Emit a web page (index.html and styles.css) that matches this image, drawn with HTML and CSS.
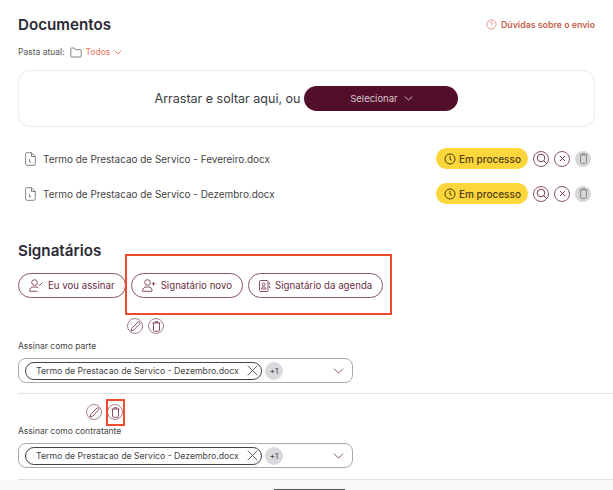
FILE: index.html
```html
<!DOCTYPE html>
<html lang="pt-BR">
<head>
  <meta charset="UTF-8" />
  <meta name="viewport" content="width=device-width, initial-scale=1.0"/>
  <title>Documentos</title>
  <link rel="stylesheet" href="styles.css">
</head>
<body>
  <div class="page">
    <div class="head-row">
      <h2>Documentos</h2>
      <a class="help-link">
        <svg width="11" height="11" viewBox="0 0 12 12" fill="none" stroke="#d9826f" stroke-width="0.9"><circle cx="6" cy="6" r="5"/><path d="M4.600 4.700a1.400 1.400 0 1 1 2.100 1.200c-.5.3-.7.6-.7 1.100M6 8.500v.4"/></svg>
        Dúvidas sobre o envio
      </a>
    </div>

    <div class="folder-row">
      <span>Pasta atual:</span>
      <svg class="folder-icon" width="12" height="11" viewBox="0 0 12 11" fill="none" stroke="#666" stroke-width="0.8"><path d="M.8 2v7.200c0 .5.3.8.8.8h8.800c.5 0 .8-.3.8-.8V3.400c0-.5-.3-.8-.8-.8H5.400L4.200 1H1.600C1.100 1 .8 1.400 .8 2z"/></svg>
      <span class="folder-name">Todos</span>
      <svg width="8" height="5" viewBox="0 0 8 5" fill="none" stroke="#f0735a" stroke-width="0.9"><path d="M.7.7 4 4 7.300.7"/></svg>
    </div>

    <div class="dropzone">
      <span>Arrastar e soltar aqui, ou</span>
      <button class="select-button">
        Selecionar
        <svg width="9" height="5" viewBox="0 0 9 5" fill="none" stroke="#d9c6ce" stroke-width="0.9"><path d="M.7.7 4.500 4 8.300.7"/></svg>
      </button>
    </div>

    <div class="file-list">
      <div class="file-row">
        <svg class="file-icon" width="11" height="14" viewBox="0 0 11 14" fill="none" stroke="#666" stroke-width="0.8"><path d="M1.800.7h4.700l3.800 3.800v7.300c0 .9-.6 1.500-1.400 1.500H1.800c-.7 0-1.200-.6-1.200-1.500V2.200C.6 1.300 1.100.7 1.800.7zM6.500.7v3.800h3.800M4.500 7v3h1.500"/></svg>
        <span class="file-name">Termo de Prestacao de Servico - Fevereiro.docx</span>
        <span class="status">
          <svg width="12" height="12" viewBox="0 0 12 12" fill="none" stroke="#4a3d12" stroke-width="1"><circle cx="6" cy="6" r="5"/><path d="M6 3v3.200l2 1.200"/></svg>
          Em processo
        </span>
        <span class="round-icon">
          <svg width="11" height="11" viewBox="0 0 11 11" fill="none" stroke="#7a3a50" stroke-width="1"><circle cx="5" cy="5" r="3.800"/><path d="m7.800 7.800 2.700 2.700"/></svg>
        </span>
        <span class="round-icon">
          <svg width="7" height="7" viewBox="0 0 7 7" fill="none" stroke="#7a3a50" stroke-width="1"><path d="m1 1 5 5M6 1 1 6"/></svg>
        </span>
        <span class="round-icon disabled">
          <svg width="9" height="11" viewBox="0 0 9 11" fill="none" stroke="#8a8a8a" stroke-width="1"><path d="M.5 2h8M3 2V.7h3V2M1.500 2v7.300c0 .6.4 1 1 1h4c.6 0 1-.4 1-1V2"/></svg>
        </span>
      </div>
      <div class="file-row">
        <svg class="file-icon" width="11" height="14" viewBox="0 0 11 14" fill="none" stroke="#666" stroke-width="0.8"><path d="M1.800.7h4.700l3.800 3.800v7.300c0 .9-.6 1.500-1.400 1.500H1.800c-.7 0-1.200-.6-1.200-1.500V2.200C.6 1.300 1.100.7 1.800.7zM6.500.7v3.800h3.800M4.500 7v3h1.500"/></svg>
        <span class="file-name">Termo de Prestacao de Servico - Dezembro.docx</span>
        <span class="status">
          <svg width="12" height="12" viewBox="0 0 12 12" fill="none" stroke="#4a3d12" stroke-width="1"><circle cx="6" cy="6" r="5"/><path d="M6 3v3.200l2 1.200"/></svg>
          Em processo
        </span>
        <span class="round-icon">
          <svg width="11" height="11" viewBox="0 0 11 11" fill="none" stroke="#7a3a50" stroke-width="1"><circle cx="5" cy="5" r="3.800"/><path d="m7.800 7.800 2.700 2.700"/></svg>
        </span>
        <span class="round-icon">
          <svg width="7" height="7" viewBox="0 0 7 7" fill="none" stroke="#7a3a50" stroke-width="1"><path d="m1 1 5 5M6 1 1 6"/></svg>
        </span>
        <span class="round-icon disabled">
          <svg width="9" height="11" viewBox="0 0 9 11" fill="none" stroke="#8a8a8a" stroke-width="1"><path d="M.5 2h8M3 2V.7h3V2M1.500 2v7.300c0 .6.4 1 1 1h4c.6 0 1-.4 1-1V2"/></svg>
        </span>
      </div>
    </div>

    <h2 class="signers-title">Signatários</h2>

    <div class="signer-buttons">
      <button class="pill-button">
        <svg width="14" height="13" viewBox="0 0 14 13" fill="none" stroke="#7a3a50" stroke-width="0.9"><circle cx="5.500" cy="3.500" r="2.800"/><path d="M.7 12.300v-1c0-2 1.600-3.300 3.500-3.300h2.500c1.200 0 2 .4 2.700 1M.7 12.300h7.800M9.500 5.500l1 1 3-3"/></svg>
        Eu vou assinar
      </button>
      <button class="pill-button">
        <svg width="14" height="13" viewBox="0 0 14 13" fill="none" stroke="#7a3a50" stroke-width="0.9"><circle cx="5.500" cy="3.500" r="2.800"/><path d="M.7 12.300v-1c0-2 1.600-3.300 3.500-3.300h2.500c1.900 0 3.300 1.300 3.300 3.300v1zM11.500 3v3.600M9.700 4.800h3.600"/></svg>
        Signatário novo
      </button>
      <button class="pill-button">
        <svg width="11" height="12" viewBox="0 0 11 12" fill="none" stroke="#7a3a50" stroke-width="0.9"><rect x=".5" y=".5" width="8.500" height="11" rx="1"/><circle cx="4.700" cy="4.500" r="1.400"/><path d="M2.400 9c0-1.300 1-2 2.300-2s2.300.7 2.300 2zM10.500 2.500v2M10.500 6v2"/></svg>
        Signatário da agenda
      </button>
    </div>

    <div class="edit-icons first">
      <span class="round-icon soft">
        <svg width="11" height="11" viewBox="0 0 11 11" fill="none" stroke="#7a3a50" stroke-width="0.9"><path d="M1 10l.7-2.700L8 1c.5-.4 1-.4 1.400 0l.4.4c.4.500.4 1 0 1.400L3.500 9.200z"/></svg>
      </span>
      <span class="round-icon soft">
        <svg width="9" height="11" viewBox="0 0 9 11" fill="none" stroke="#7a3a50" stroke-width="0.9"><path d="M.5 2h8M3 2V.7h3V2M1.500 2v7.300c0 .6.4 1 1 1h4c.6 0 1-.4 1-1V2"/></svg>
      </span>
    </div>

    <label class="field-label">Assinar como parte</label>
    <div class="select-box">
      <span class="chip">
        Termo de Prestacao de Servico - Dezembro.docx
        <svg width="11" height="11" viewBox="0 0 11 11" fill="none" stroke="#555" stroke-width="0.9"><path d="m.7.7 9.600 9.600M10.300.7.7 10.300"/></svg>
      </span>
      <span class="more-count">+1</span>
      <svg class="select-arrow" width="11" height="6" viewBox="0 0 12 7" fill="none" stroke="#7a3a50" stroke-width="1"><path d="M.7.7 6 6l5.300-5.300"/></svg>
    </div>

    <hr class="divider">

    <div class="edit-icons second">
      <span class="round-icon soft">
        <svg width="11" height="11" viewBox="0 0 11 11" fill="none" stroke="#7a3a50" stroke-width="0.9"><path d="M1 10l.7-2.700L8 1c.5-.4 1-.4 1.400 0l.4.4c.4.500.4 1 0 1.400L3.500 9.200z"/></svg>
      </span>
      <span class="round-icon soft">
        <svg width="9" height="11" viewBox="0 0 9 11" fill="none" stroke="#7a3a50" stroke-width="0.9"><path d="M.5 2h8M3 2V.7h3V2M1.500 2v7.300c0 .6.4 1 1 1h4c.6 0 1-.4 1-1V2"/></svg>
      </span>
    </div>

    <label class="field-label tight">Assinar como contratante</label>
    <div class="select-box">
      <span class="chip">
        Termo de Prestacao de Servico - Dezembro.docx
        <svg width="11" height="11" viewBox="0 0 11 11" fill="none" stroke="#555" stroke-width="0.9"><path d="m.7.7 9.600 9.600M10.300.7.7 10.300"/></svg>
      </span>
      <span class="more-count">+1</span>
      <svg class="select-arrow" width="11" height="6" viewBox="0 0 12 7" fill="none" stroke="#7a3a50" stroke-width="1"><path d="M.7.7 6 6l5.300-5.300"/></svg>
    </div>

    <hr class="divider last">
  </div>

  <div class="footer"><span class="footer-bar"></span></div>

  <!-- marcas vermelhas da captura -->
  <div class="mark mark-buttons"></div>
  <div class="mark mark-trash"></div>
</body>
</html>
```

FILE: styles.css
```css
body {
  margin: 0;
  position: relative;
  width: 613px;
  height: 490px;
  overflow: hidden;
  background-color: #fff;
  color: #2b2b33;
  font-family: Inter, 'Noto Sans', sans-serif;
}

.page {
  box-sizing: border-box;
  padding: 16px 18px 0;
  height: 480px;
}

h2 {
  margin: 0;
  font-size: 15.2px;
  line-height: 18px;
  font-weight: 600;
  color: #2a2a35;
}

.head-row {
  display: flex;
  justify-content: space-between;
  align-items: center;
}

.help-link {
  display: flex;
  align-items: center;
  gap: 4px;
  margin-bottom: 2px;
  font-size: 8.800px;
  font-weight: 600;
  color: #c4614e;
}

.folder-row {
  display: flex;
  align-items: center;
  gap: 4px;
  margin-top: 11px;
  height: 14px;
  font-size: 8.500px;
  color: #555;
}

.folder-icon {
  margin-left: 1px;
}

.folder-name {
  color: #f0735a;
}

.dropzone {
  display: flex;
  justify-content: center;
  align-items: center;
  gap: 4px;
  margin-top: 11px;
  width: 577px;
  height: 57px;
  box-sizing: border-box;
  border: 1px solid #eaeaf0;
  border-radius: 12px;
  font-size: 12.500px;
  color: #3a3a40;
}

.select-button {
  display: flex;
  justify-content: center;
  align-items: center;
  gap: 6px;
  width: 154px;
  height: 25px;
  padding: 0;
  border: none;
  border-radius: 13px;
  background-color: #520f29;
  color: #d9c6ce;
  font-family: inherit;
  font-size: 9.500px;
}

.file-list {
  margin-top: 14px;
}

.file-row {
  display: flex;
  align-items: center;
  gap: 5px;
  height: 35px;
  padding-left: 7px;
  padding-right: 4px;
  font-size: 9.930px;
  color: #444;
}

.file-icon {
  margin-right: 2px;
}

.file-name {
  flex: 1;
}

.status {
  display: flex;
  align-items: center;
  gap: 3px;
  width: 92px;
  height: 21px;
  box-sizing: border-box;
  padding-left: 8px;
  border-radius: 11px;
  background-color: #fdd63c;
  color: #4a3d12;
  font-size: 10px;
  font-weight: 500;
}

.round-icon {
  display: flex;
  justify-content: center;
  align-items: center;
  width: 16px;
  height: 16px;
  box-sizing: border-box;
  border: 1px solid #8a5468;
  border-radius: 50%;
}

.round-icon.disabled {
  border: none;
  background-color: #d6d6d6;
}

.round-icon.soft {
  border-color: #a8808e;
}

.signers-title {
  margin-top: 31px;
}

.signer-buttons {
  display: flex;
  gap: 5px;
  margin-top: 13px;
}

.pill-button {
  display: flex;
  align-items: center;
  gap: 5px;
  height: 25px;
  padding: 0 10px;
  border: 1px solid #8a5468;
  border-radius: 13px;
  background-color: #fff;
  color: #6b2d43;
  font-family: inherit;
  font-size: 9.700px;
}

.edit-icons {
  display: flex;
  gap: 5px;
}

.edit-icons.first {
  margin: 20px 0 0 109px;
}

.edit-icons.second {
  margin: 10px 0 0 68px;
}

.field-label {
  display: block;
  margin-top: 6px;
  font-size: 8.500px;
  line-height: 12px;
  color: #444;
}

.field-label.tight {
  margin-top: 5px;
}

.select-box {
  display: flex;
  align-items: center;
  gap: 3px;
  margin-top: 6px;
  width: 335px;
  height: 25px;
  box-sizing: border-box;
  padding: 0 8px 0 6px;
  border: 1px solid #aaa;
  border-radius: 8px;
}

.chip {
  display: flex;
  align-items: center;
  justify-content: space-between;
  width: 237px;
  height: 18px;
  box-sizing: border-box;
  padding: 0 3px 0 10px;
  border: 1px solid #444;
  border-radius: 9px;
  font-size: 8.700px;
  color: #444;
}

.more-count {
  display: flex;
  justify-content: center;
  align-items: center;
  width: 18px;
  height: 18px;
  border-radius: 50%;
  background-color: #d9d9de;
  font-size: 8px;
  color: #444;
}

.select-arrow {
  margin-left: auto;
}

.divider {
  margin: 10px 0 0;
  border: none;
  border-top: 1px solid #e2e2e2;
  width: 595px;
}

.divider.last {
  margin-top: 11px;
}

.footer {
  display: flex;
  justify-content: center;
  align-items: flex-end;
  height: 10px;
  background-color: #f7f8fa;
}

.footer-bar {
  width: 71px;
  height: 1px;
  margin-left: 6px;
  background-color: #555;
}

.mark {
  position: absolute;
  box-sizing: border-box;
  border: 2px solid #f04a30;
}

.mark-buttons {
  left: 125px;
  top: 254px;
  width: 267px;
  height: 61px;
}

.mark-trash {
  left: 106px;
  top: 399px;
  width: 19px;
  height: 27px;
}
```
